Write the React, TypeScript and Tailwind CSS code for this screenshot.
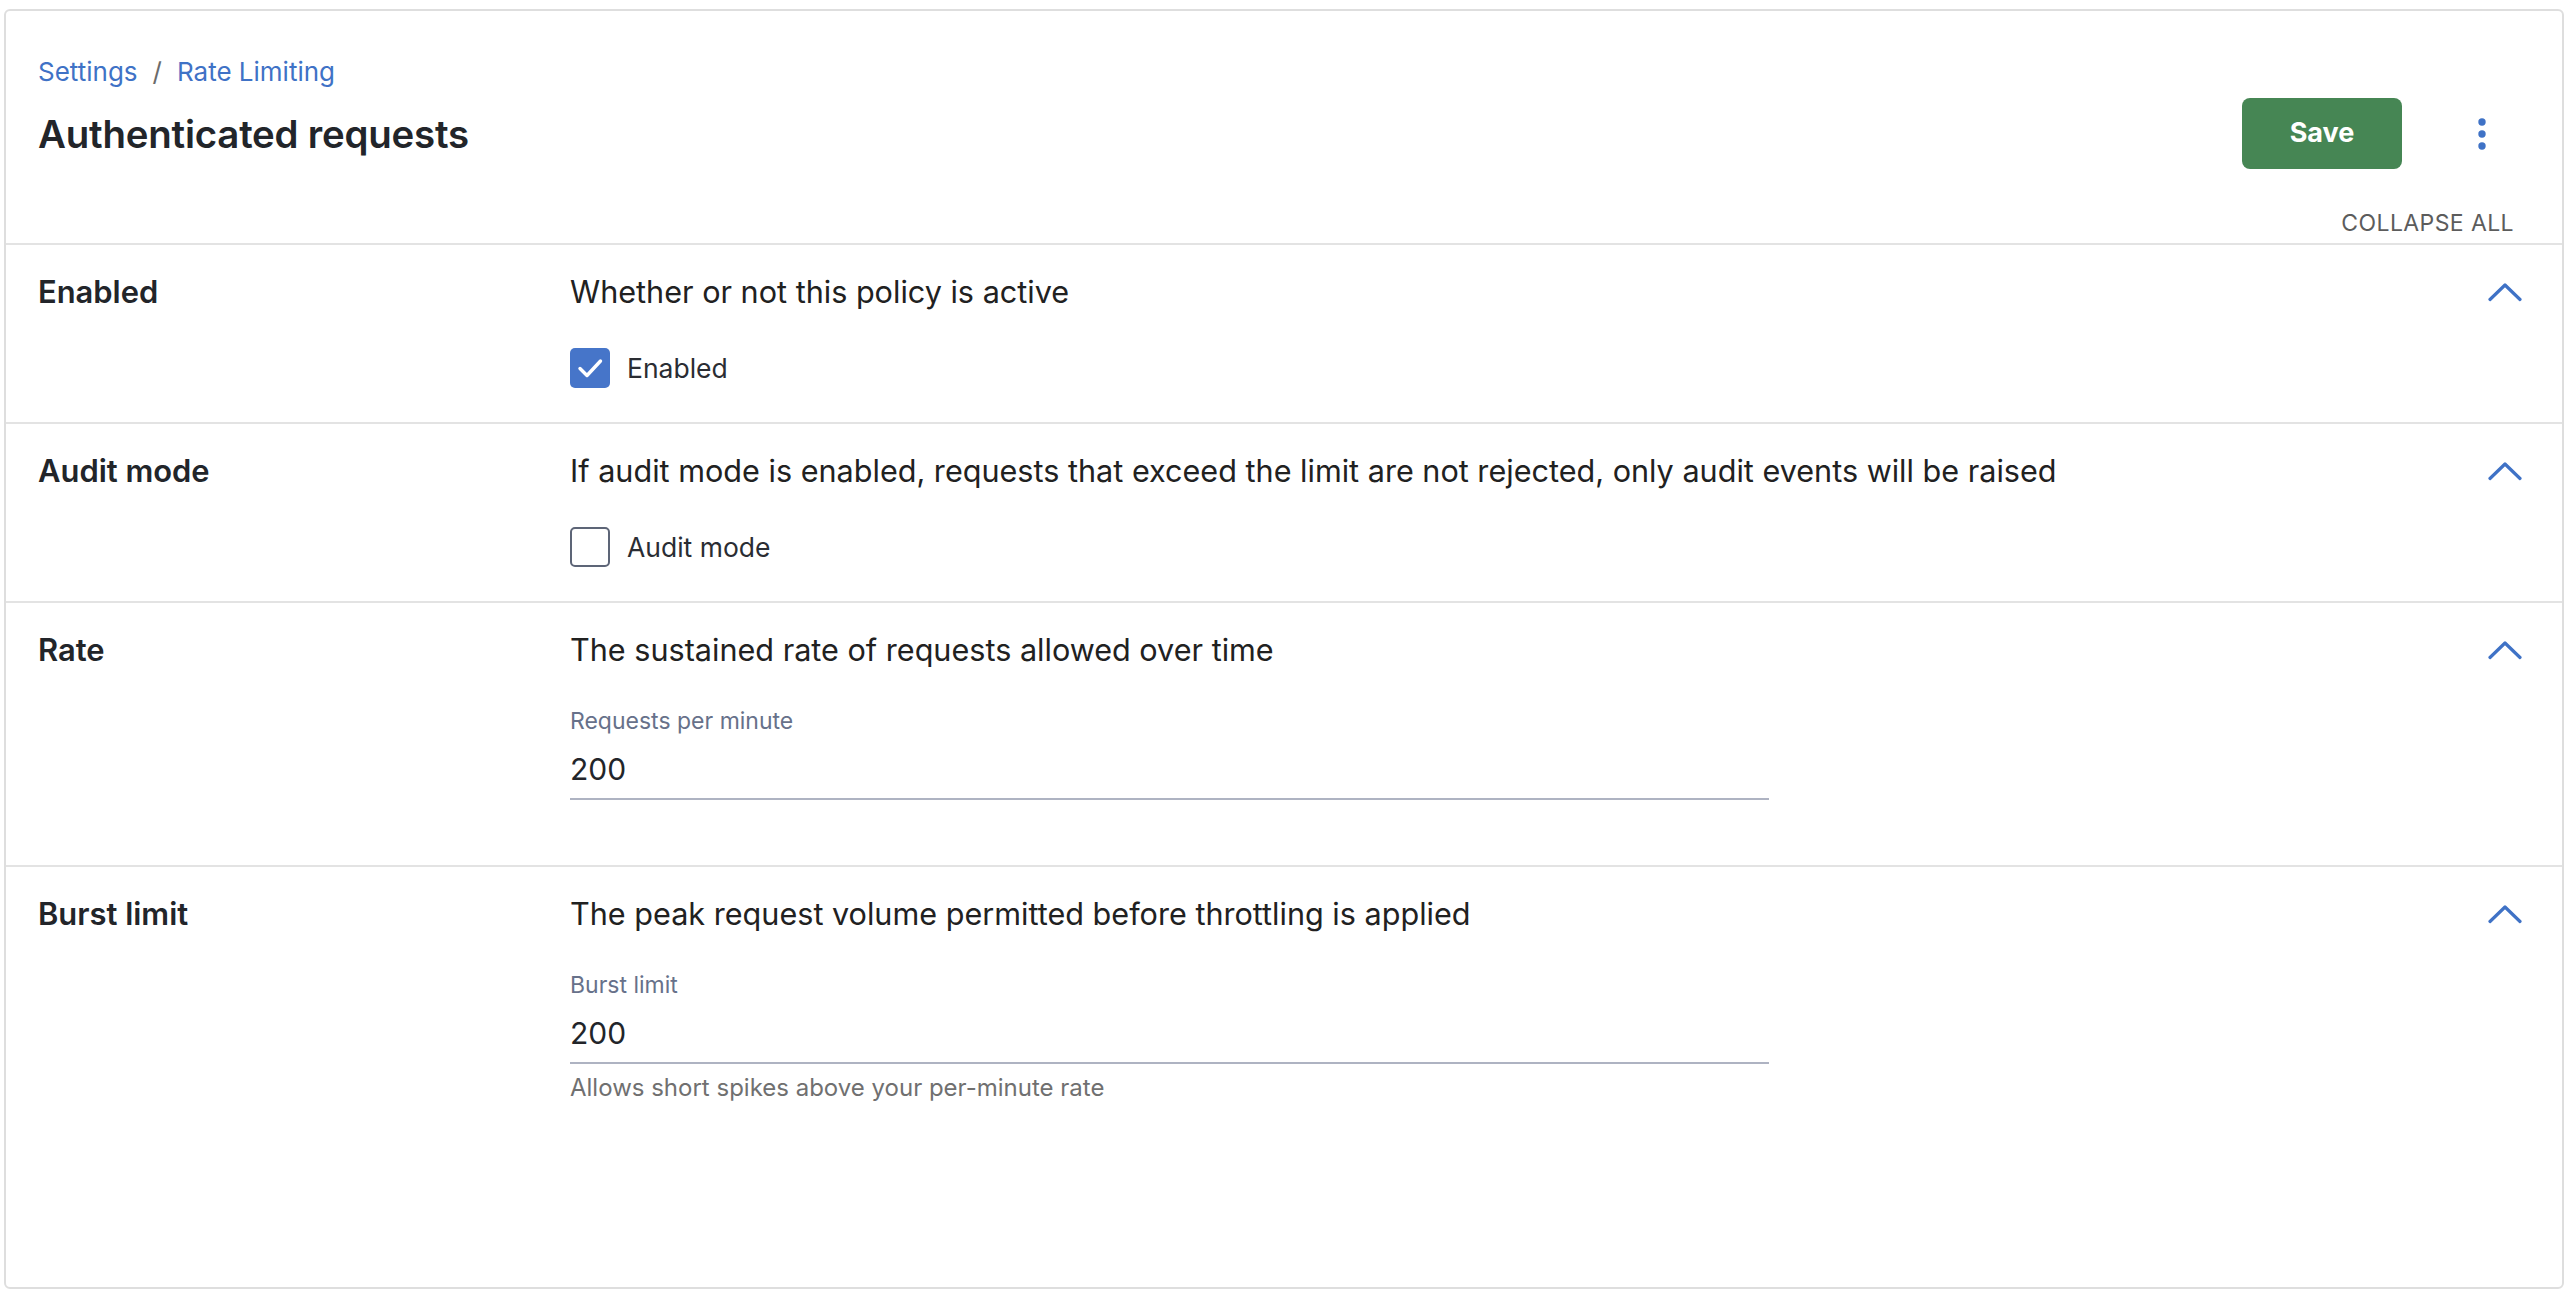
import { useState } from 'react';

const ROWS = [
  {
    id: 'enabled',
    title: 'Enabled',
    desc: 'Whether or not this policy is active',
    kind: 'check' as const,
    label: 'Enabled',
    checked: true,
  },
  {
    id: 'audit',
    title: 'Audit mode',
    desc: 'If audit mode is enabled, requests that exceed the limit are not rejected, only audit events will be raised',
    kind: 'check' as const,
    label: 'Audit mode',
    checked: false,
  },
  {
    id: 'rate',
    title: 'Rate',
    desc: 'The sustained rate of requests allowed over time',
    kind: 'input' as const,
    label: 'Requests per minute',
    value: '200',
  },
  {
    id: 'burst',
    title: 'Burst limit',
    desc: 'The peak request volume permitted before throttling is applied',
    kind: 'input' as const,
    label: 'Burst limit',
    value: '200',
    helper: 'Allows short spikes above your per-minute rate',
  },
];

function Chevron() {
  return (
    <svg width="34" height="20" viewBox="0 0 34 20" fill="none">
      <polyline points="2,17.5 17,3 32,17.5" stroke="#3f72c6" strokeWidth="3.2" strokeLinecap="round" strokeLinejoin="round" />
    </svg>
  );
}

function Checkbox({ checked, onChange }: { checked: boolean; onChange: () => void }) {
  return (
    <button
      onClick={onChange}
      className={
        checked
          ? 'w-[40px] h-[40px] rounded-[5px] bg-[#4675c9] flex items-center justify-center'
          : 'w-[40px] h-[40px] rounded-[5px] border-2 border-[#5d6577] bg-white'
      }
    >
      {checked && (
        <svg width="40" height="40" viewBox="0 0 40 40" fill="none">
          <polyline points="10,20.5 17,27.5 30.5,13" stroke="white" strokeWidth="3.4" strokeLinecap="round" strokeLinejoin="round" />
        </svg>
      )}
    </button>
  );
}

export default function App() {
  const [checks, setChecks] = useState<Record<string, boolean>>({ enabled: true, audit: false });

  return (
    <div className="min-h-screen bg-white pt-[9px] pl-[4px] pr-[6px] font-['Inter',sans-serif] text-[#212121]">
      <div className="h-[1280px] flex flex-col rounded-[6px] border-2 border-[#dedede] bg-white">
        {/* header */}
        <div className="pl-[32px] pr-[40px] pt-[41px] pb-[4px]">
          <div className="flex items-center text-[26px] leading-[39px]">
            <a className="text-[#3f72c6]">Settings</a>
            <span className="mx-[15px] text-[#6b6b6b]">/</span>
            <a className="text-[#3f72c6]">Rate Limiting</a>
          </div>
          <div className="mt-[7px] flex items-center justify-between">
            <h1 className="text-[38.4px] leading-[48px] font-semibold text-[#22252a] tracking-[-0.2px]">Authenticated requests</h1>
            <div className="flex items-center">
              <button className="w-[160px] h-[71px] rounded-[8px] bg-[#468654] text-white text-[27px] font-bold">Save</button>
              <button className="ml-[58px] mr-[18px] w-[44px] h-[44px] flex items-center justify-center">
                <svg width="10" height="34" viewBox="0 0 10 34">
                  <circle cx="5" cy="5" r="3.7" fill="#3f72c6" />
                  <circle cx="5" cy="17" r="3.7" fill="#3f72c6" />
                  <circle cx="5" cy="29" r="3.7" fill="#3f72c6" />
                </svg>
              </button>
            </div>
          </div>
          <div className="mt-[38px] flex justify-end">
            <button className="mr-[8px] text-[23px] leading-[32px] uppercase tracking-[0.4px] text-[#5c5c5c]">Collapse all</button>
          </div>
        </div>

        {ROWS.map((row, i) => (
          <div
            key={row.id}
            className={
              i === ROWS.length - 1
                ? 'flex-1 flex border-t-2 border-[#e3e3e3] pl-[32px] pr-[40px] pt-[25px] pb-[34px]'
                : 'flex border-t-2 border-[#e3e3e3] pl-[32px] pr-[40px] pt-[25px] pb-[34px]'
            }
          >
            <div className="w-[532px] shrink-0 text-[30.9px] leading-[44px] font-semibold text-[#22252a]">{row.title}</div>
            <div className="flex-1 min-w-0">
              <p className="text-[30.6px] leading-[44px] text-[#212121]">{row.desc}</p>
              {row.kind === 'check' ? (
                <label className="mt-[34px] flex items-center gap-[17px]">
                  <Checkbox
                    checked={!!checks[row.id]}
                    onChange={() => setChecks({ ...checks, [row.id]: !checks[row.id] })}
                  />
                  <span className="text-[26.5px] leading-[40px] text-[#2a2d33]">{row.label}</span>
                </label>
              ) : (
                <div className={row.helper ? 'mt-[34px] w-[1199px]' : 'mt-[34px] mb-[31px] w-[1199px]'}>
                  <div className="text-[23px] leading-[30px] text-[#67718a]">{row.label}</div>
                  <input
                    defaultValue={row.value}
                    className="mt-[13px] w-full pb-[9px] border-b-2 border-[#aeb3c2] text-[30px] leading-[40px] text-[#22252a] outline-none bg-transparent"
                  />
                  {row.helper && (
                    <div className="mt-[8px] text-[24px] leading-[32px] text-[#707070]">{row.helper}</div>
                  )}
                </div>
              )}
            </div>
            <div className="h-[44px] flex items-center">
              <Chevron />
            </div>
          </div>
        ))}
      </div>
    </div>
  );
}
